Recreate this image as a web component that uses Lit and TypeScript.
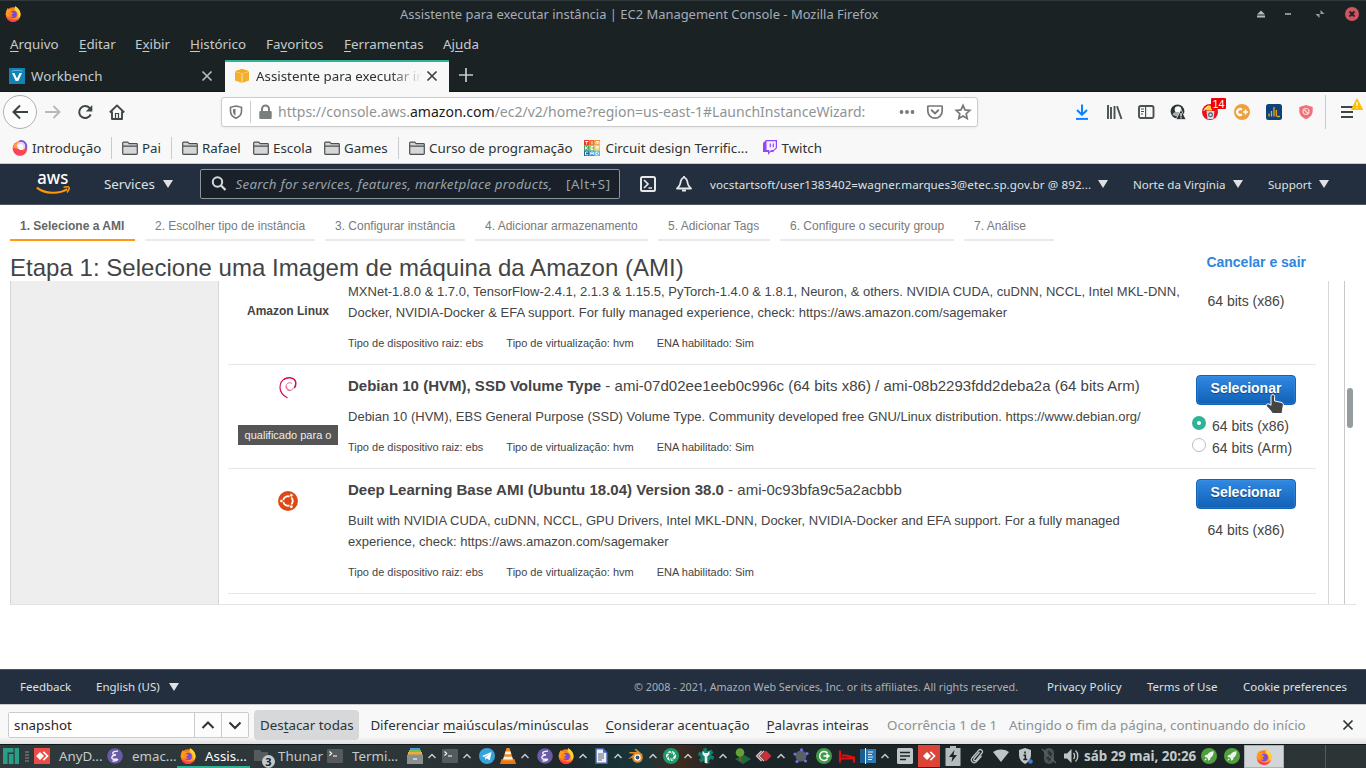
import { LitElement, html, svg, css } from "lit";
import { customElement } from "lit/decorators.js";

const icon = (body: unknown, w = 16, h = 16, vb = `0 0 ${w} ${h}`) =>
  html`<svg width=${w} height=${h} viewBox=${vb} fill="none">${body}</svg>`;

const firefox = () => icon(svg`
  <circle cx="8" cy="8.6" r="7.3" fill="#ff7a1a"/>
  <path d="M.7 9C.7 5.500 2 3.300 3 1.800c.2 1 .8 1.700 1.500 2C6 3.500 7.600 4 8.500 5L10.200.2c2.900 1.800 5.400 4.600 5.200 8.600l-4 4.800z" fill="#ff9a1f"/>
  <path d="M10.200.2c2.900 1.800 5.800 4.700 5.300 9.200-.3 1.600-1.200 3.200-2.400 4.300.8-3 .3-6.700-2-8.600C9.500 3.700 9.500 2 10.200.2z" fill="#ffd531"/>
  <path d="M1.200 11C2.400 14.200 5 15.900 8.100 15.900c3.300 0 6.300-2.100 7-5.400-2 3.400-4.700 3.700-7.300 3.300-2.700-.4-4.600-2-6.600-2.800z" fill="#ff3a57"/>
  <circle cx="8.300" cy="8.400" r="3.600" fill="#7b4bd8"/>
  <path d="M3.400 6c1.600-.5 2.600.2 4.500.4.800.5.300 1.200-1.200 1.800-.7 1 .4 2.300 2 1.900-1.300 1.600-5.800.8-5.300-4.100z" fill="#ff8a16"/>`);
const cross = (c: string) => icon(svg`<path d="M3.500 3.500l9 9m0-9l-9 9" stroke=${c} stroke-width="1.700"/>`);
const folder = () => icon(svg`<path d="M.7 13.500V3a.8.8 0 0 1 .8-.8h4.200l1.500 1.500h7.300a.8.8 0 0 1 .8.8v9a.8.8 0 0 1-.8.800h-13a.8.8 0 0 1-.8-.8zM1 6.100h14" fill="#d6d6d6" stroke="#4a4f51" stroke-width="1.200"/>`);
const tri = () => html`<i class="tri"></i>`;
const caret = () => icon(svg`<path d="M.5 6L4 2.500 7.500 6" stroke="#c3c9ca" stroke-width="1.500"/>`, 8, 8);
const emacs = () => icon(svg`<circle cx="8" cy="8" r="7.800" fill="#6a5ba6"/><path d="M11 3.200C8 3 5.500 4 5.800 5.500 6 6.700 9 6.700 9 6.700S4.800 7.400 4.800 9.800c0 2 3.200 1.600 5.600 1.200M5.500 13c2.500.3 4.500-.5 5.500-1.800" stroke="#f2effa" stroke-width="1.400"/>`);
const terminal = () => icon(svg`<rect y="1" width="16" height="14" rx="1" fill="#555b5d"/><path d="M2.500 3.500l2.200 2-2.200 2M6 8h4" stroke="#fff" stroke-width="1.100"/>`);
const rocket = () => icon(svg`<circle cx="8" cy="8" r="8" fill="#4f9f3c"/><path d="M12.700 3.300c-3 0-5 1.300-6.300 3.400l-2 .4-1 2 2 .2 1.500 1.500.2 2 2-1 .4-2c2-1.300 3.200-3.300 3.200-6.500zM4.300 10.200l-1 2.600 2.600-1z" fill="#eef2ee"/>`);
const anydesk = (w: number) => html`<span class="ad ad${w}">${icon(svg`<path d="M6 4l4 4-4 4-4-4z" fill="#fff"/><path d="M9.300 3.900l4.200 4.100-4.200 4.100" stroke="#fff" stroke-width="1.700"/>`)}</span>`;

@customElement("app-root")
export class AppRoot extends LitElement {
  static styles = css`
    :host { display: block; width: 1366px; height: 768px; overflow: hidden; background: #fff;
      font-family: "Noto Sans", sans-serif; font-size: 13.330px; color: #2c3335; }
    * { box-sizing: border-box; }
    svg { display: block; overflow: visible; }
    u { text-underline-offset: 2px; text-decoration-thickness: 1px; }
    .grid { display: grid; align-items: center; white-space: nowrap; }
    .grid > * { min-width: 0; width: max-content; }

    .titlebar { height: 28px; background: #1b2224; border-top: 1px solid #2f393b; color: #a5adb8; font-size: 12.950px;
      grid-template-columns: 395px 852px 23px 32px 32px 1fr; padding: 0 0 1px 5px; }
    .menubar { height: 32px; background: #1b2224; color: #c6cbcb; padding: 0 0 1px 10px;
      grid-template-columns: 69px 56px 55px 76px 78px 99px 1fr; }
    .tabs { height: 32px; background: #1b2224; display: flex; }
    .tab { display: grid; align-items: center; height: 32px; color: #c6cbcb; border-bottom: 1px solid #101516; white-space: nowrap; border-top: 2px solid transparent; padding-bottom: 1px; }
    .tab.one { width: 225px; padding-left: 9px; grid-template-columns: 22px 168px 1fr; }
    .tab.two { width: 224px; padding-left: 9px; grid-template-columns: 22px 168px 1fr; background: #f8f8f8; border-bottom-color: #f8f8f8; border-top-color: #2eb398; color: #2c3335; }
    .tab .lbl { overflow: hidden; }
    .tab.two .lbl { width: 166px; -webkit-mask-image: linear-gradient(90deg, #000 134px, transparent 166px); }
    .newtab { flex: 1; border-bottom: 1px solid #101516; padding: 7px 0 0 9px; }

    .nav { height: 40px; background: #f8f8f8; padding-left: 3px;
      grid-template-columns: 42px 32px 32px 112px 853px 32px 32px 32px 32px 32px 32px 32px 27px 1fr; }
    .back { width: 34px; height: 34px; border: 1px solid #aeb1b2; border-radius: 50%; background: #fcfcfc; padding: 8px; }
    .nav .url { width: 757px; height: 30px; background: #fff; border: 1px solid #ccc; border-radius: 3px; box-shadow: 0 1px 3px #0001;
      color: #909394; font-size: 14.030px; grid-template-columns: 22px 7px 21px 621px 28px 28px 1fr; padding-left: 6px; }
    .url span { padding-bottom: 2px; }
    .url b { font-weight: 400; color: #1c2021; }
    .vline { width: 1px; background: #c9cbcc; height: 22px; }
    .edge { display: grid; grid-template-columns: 14px 1fr; align-items: center; }
    .vline.tall { height: 34px; }
    .badged { position: relative; }
    .badge { position: absolute; left: 9px; top: -6px; width: 15px; height: 11px; border-radius: 1px; background: #f00000; color: #fff; font: 11px/12px "Liberation Sans", sans-serif; text-align: center; }
    .warn { position: absolute; left: 12px; top: -6px; }

    .marks { height: 32px; background: #f8f8f8; border-bottom: 1px solid #c6c8c9;
      padding-left: 12px; grid-template-columns: 20px 79px 11px 20px 29px 11px 20px 51px 20px 51px 20px 54px 11px 20px 154.500px 22px 157.500px 18.500px 1fr; }

    .aws { height: 41px; background: #232f3e; border-bottom: 1px solid #4b5560; color: #dfe1e3; padding-left: 36px;
      grid-template-columns: 68px 59px 37px 440px 36px 34px 388px 35px 100px 35px 51px 1fr; }
    .aws .sm { font-size: 11.600px; padding-top: 1px; }
    .aws .user { letter-spacing: .09px; }
    .tri { display: block; width: 0; height: 0; border: 5px solid transparent; border-top: 8px solid #dfe1e3; border-bottom: 0; }
    .search { height: 30px; width: 420px; border: 1px solid #8c9596; border-radius: 2px; background: #192029; color: #98a2a6;
      grid-template-columns: 23.500px 330.500px 1fr; padding-left: 11px; }
    .search em { letter-spacing: .26px; }
    .search span { letter-spacing: .6px; }

    .page { height: 464px; font-family: "Liberation Sans", sans-serif; color: #444; }
    .steps { display: flex; gap: 10px; padding: 0 10px; height: 36px; }
    .step { height: 36px; padding: 0 10px; font-size: 12px; line-height: 42px; border-bottom: 2px solid #eaeaea; color: #7a7a7a; white-space: nowrap; }
    .step.on { font-weight: 700; color: #666; border-color: #ff9914; }
    .s1 { width: 125px; } .s2 { width: 170px; } .s3 { width: 140px; } .s4 { width: 173px; } .s5 { width: 112px; } .s6 { width: 174px; } .s7 { width: 90px; }
    .head { display: flex; justify-content: space-between; padding: 0 60px 0 10px; height: 40px; }
    h1 { margin: 0; font-size: 24px; font-weight: 400; line-height: 54px; height: 40px; white-space: nowrap; letter-spacing: .025px; }
    .cancel { color: #2f86de; font-weight: 700; font-size: 14px; line-height: 42px; }
    .pane { display: flex; width: 1346px; margin-left: 10px; height: 324px; border-bottom: 1px solid #e2e2e2; overflow: hidden; }
    .side { width: 209px; background: #eee; border: solid #d6d6d6; border-width: 0 1px; }
    .list { width: 1110px; padding: 0 12px 0 9px; border-right: 1px solid #d6d6d6; }
    .track { width: 16px; border-right: 1px solid #c8c8c8; }
    .thumb { width: 6px; height: 40px; border-radius: 3px; background: #959c9d; margin: 107px 0 0 2px; }
    .row { display: grid; grid-template-columns: 120px 848px 1fr; border-bottom: 1px solid #e6e6e6; height: 104px; }
    .row.first { height: 84px; }
    .row.tall { height: 125px; }
    .logo { display: flex; flex-direction: column; align-items: center; }
    .amz { font-weight: 700; font-size: 12px; line-height: 60px; }
    .debian { margin-top: 12px; }
    .ubuntu { margin-top: 22px; }
    .tip { margin-top: 26px; width: 100px; height: 20px; background: #555; color: #eee; font-size: 11px; line-height: 20px; text-align: center; }
    .name { font-size: 15px; line-height: 21px; padding-top: 10px; height: 41px; white-space: nowrap; letter-spacing: .011px; }
    .desc { font-size: 13px; line-height: 21px; white-space: nowrap; letter-spacing: .008px; }
    .meta { display: flex; gap: 23px; font-size: 11px; line-height: 21px; margin-top: 10px; white-space: nowrap; }
    .arch { display: flex; flex-direction: column; align-items: center; width: 100px; font-size: 14px; white-space: nowrap; position: relative; }
    .first .arch { line-height: 40px; }
    .btn { width: 100px; height: 30px; flex: none; margin-top: 10px; border: 1px solid #1163b5; border-radius: 4px; background: linear-gradient(#3089e2, #1160b6);
      box-shadow: inset 0 0 0 1px #4a97e255; color: #fff; font-weight: 700; font-size: 14px; line-height: 24px; text-align: center; text-shadow: 0 1px 1px #0006; }
    .single { line-height: 42px; }
    .radio { display: grid; grid-template-columns: 20px 1fr; align-self: flex-start; margin-left: -4px; height: 22px; line-height: 20px; }
    .radios { padding-top: 11px; align-self: flex-start; }
    .dot { width: 14px; height: 14px; border-radius: 50%; border: 1px solid #b8bcbe; background: #fff; }
    .dot.on { border: 5px solid #2eb398; }
    .cursor { position: absolute; left: 69px; top: 29px; }

    .foot { height: 35px; background: #232f3e; border-top: 1px solid #4b5560; color: #dfe1e3; font-size: 11.500px; padding: 0 0 1px 20px;
      grid-template-columns: 76px 73px 465px 413px 100px 96px 1fr; }
    .foot .dim { color: #a9b0b7; font-size: 10.760px; }
    .foot .pp { letter-spacing: .16px; }

    .find { height: 40px; background: linear-gradient(#f8f8f8 32px, #dcdcdc 40px); border-top: 1px solid #c9cbcc; padding-left: 8px;
      grid-template-columns: 246px 116.400px 235px 161px 120.600px 122px 331px 1fr; }
    .find .box { display: grid; grid-template-columns: 185px 27px 1fr; width: 241px; height: 26px; border: 1px solid #c9cbcc; background: #fff; border-radius: 2px; line-height: 24px; align-items: stretch; }
    .box > * { border-left: 1px solid #c9cbcc; background: #fcfcfc; padding: 4px 5px; }
    .box > .q { border: 0; padding: 0 5px; background: #fff; color: #1f2526; }
    .find .all { height: 30px; border-radius: 4px; background: #d6d8da; padding: 0 6px; line-height: 30px; width: 105px; }
    .find .dim { color: #8d9192; }

    .task { height: 24px; color: #c3cacb; padding: 0 0 1px 3px; border-top: 1px solid #11181a; font-size: 13.330px;
      background: linear-gradient(#2eb398, #2eb398) 177px 21px / 73px 2px no-repeat,
        linear-gradient(90deg, #2f383b 0, #2c3538 400px, #252c2f 520px, #1d282b 560px, #17353a 640px, #3d2b20 680px, #1b2527 720px, #1d2426 1240px, #2d3436 1290px);
      grid-template-columns: 22px 9px 25px 48px 25px 48px 25px 49px 24px 49px 25px 55px 21px 14px 21px 16px 21px 21px 16px 21px 21px repeat(4, 14px 21px) 16px 21px 21px 16px 23px 23px 21px 21px 16px 21px 27px 24px 24px 24px 24px 23px 20px 117px 23px 20px 1fr; grid-template-rows: 22px; }
    .task .act { color: #fff; }
    .task .clock { font-weight: 700; font-size: 13.400px; }
    .ad { display: grid; place-items: center; background: #ee4b45; width: 16px; height: 16px; }
    .task .ad22 { width: 22px; height: 22px; background: #dd4439; }
    .desk { display: flex; height: 23px; }
    .ws { width: 40px; height: 23px; background: #d3d6d8; border: 1px solid #aab0b3; padding: 3px 0 0 11px; }
    .ws2 { width: 42px; height: 23px; border-right: 1px solid #50595c; }
    .cnt { position: absolute; left: 8px; top: 7px; width: 13px; height: 13px; border-radius: 50%; background: #c3cacb; color: #1b2224; font: bold 11px/13px "Noto Sans", sans-serif; text-align: center; }
  `;

  private meta() {
    return html`<div class="meta"><span>Tipo de dispositivo raiz: ebs</span><span>Tipo de virtualização: hvm</span><span>ENA habilitado: Sim</span></div>`;
  }

  private chrome() {
    return html`
      <div class="titlebar grid">
        ${firefox()}
        <span>Assistente para executar instância | EC2 Management Console - Mozilla Firefox</span>
        ${icon(svg`<path d="M9 4.500l4 4H5zM5 9.500h8v2H5z" fill="#b5bcbd"/>`)}
        ${icon(svg`<path d="M10 8h6" stroke="#a9b0b1" stroke-width="1.600"/>`)}
        ${icon(svg`<path d="M13.500 4v4H17.500zM12.500 12V8H8.500z" fill="#9aa1a2"/>`)}
        ${icon(svg`<circle cx="13" cy="8" r="7" fill="#cf5560"/><path d="M10.500 5.500l5 5m0-5l-5 5" stroke="#1b2224" stroke-width="1.800"/>`)}
      </div>
      <div class="menubar grid">
        <span><u>A</u>rquivo</span><span><u>E</u>ditar</span><span>E<u>x</u>ibir</span><span><u>H</u>istórico</span><span>Fa<u>v</u>oritos</span><span><u>F</u>erramentas</span><span>Aj<u>u</u>da</span>
      </div>
      <div class="tabs">
        <div class="tab one">
          ${icon(svg`<rect width="16" height="16" fill="#1283b5"/><path d="M3 5h2.400L8 10.500 10.600 5H13L9.300 13H6.700z" fill="#fff"/><path d="M2.500 3.200c3.300-1.200 7.700-1.200 11 0" stroke="#7cc4e0" stroke-width=".8"/>`)}
          <span class="lbl">Workbench</span>${cross("#b5bcbd")}
        </div>
        <div class="tab two">
          ${icon(svg`<path d="M1 3.300L8 1l7 2.300v9.200L8 15l-7-2.500z" fill="#f2b02c"/><path d="M1 3.300l7 1.900 7-1.900M8 5.200V15" stroke="#fbe3ae" stroke-width="1"/><path d="M8 1l7 2.300-7 1.900-7-1.900z" fill="#f6a91b"/>`)}
          <span class="lbl">Assistente para executar instância</span>${cross("#3c4345")}
        </div>
        <div class="newtab">${icon(svg`<path d="M8 1v14M1 8h14" stroke="#c6cbcb" stroke-width="1.700"/>`)}</div>
      </div>
      <div class="nav grid">
        <div class="back">${icon(svg`<path d="M16 8H2M8 1.500L1.500 8 8 14.500" stroke="#3b4244" stroke-width="2"/>`)}</div>
        ${icon(svg`<path d="M0 8h14M8.500 2L14.500 8l-6 6" stroke="#b7babb" stroke-width="1.900"/>`)}
        ${icon(svg`<path d="M13.700 10.500A6 6 0 1 1 12.600 4L14 5.500" stroke="#3f4648" stroke-width="2"/><path d="M15.300 1v6.500H8.800z" fill="#3f4648"/>`)}
        ${icon(svg`<path d="M.8 8.500L8 1.400l7.200 7.100M3 7.500v7.500h10V7.500" stroke="#3f4648" stroke-width="1.900" stroke-linejoin="round"/><path d="M6.500 15V9.500h3V15" stroke="#3f4648" stroke-width="1.200"/>`)}
        <div class="url grid">
          ${icon(svg`<path d="M8 2l5.500 1.300v4c0 3-2 5.500-5.500 7-3.500-1.500-5.500-4-5.500-7v-4z" stroke="#747879" stroke-width="1.600"/><path d="M7.500 4.700L5 5.300V7.500c0 1.800.9 3.200 2.500 4.200z" fill="#747879"/>`)}
          <i class="vline"></i>
          ${icon(svg`<rect x="2.300" y="7" width="12.400" height="8" rx="1" fill="#7a7e7f"/><path d="M5 7V5a3.500 3.500 0 0 1 7 0v2" stroke="#7a7e7f" stroke-width="2"/>`)}
          <span>https://console.aws.<b>amazon.com</b>/ec2/v2/home?region=us-east-1#LaunchInstanceWizard:</span>
          ${icon(svg`<circle cx="2.500" cy="8" r="1.900" fill="#747879"/><circle cx="8" cy="8" r="1.900" fill="#747879"/><circle cx="13.500" cy="8" r="1.900" fill="#747879"/>`)}
          ${icon(svg`<path d="M1.500 2h13a.7.7 0 0 1 .7.700V7A7.200 7.200 0 0 1 .8 7V2.700A.7.700 0 0 1 1.500 2z" stroke="#747879" stroke-width="1.700"/><path d="M4.700 6.200L8 9.400l3.300-3.200" stroke="#747879" stroke-width="1.900" stroke-linecap="round"/>`)}
          ${icon(svg`<path d="M8 1.400l2 4.500 4.800.5-3.600 3.300 1 4.900L8 12.100l-4.200 2.500 1-4.900L1.200 6.400 6 5.900z" stroke="#747879" stroke-width="1.700"/>`)}
        </div>
        ${icon(svg`<path d="M8 .5v10M3 6l5 4.800L13 6" stroke="#0a84ff" stroke-width="2"/><path d="M2 14.900h12" stroke="#0a84ff" stroke-width="2"/>`)}
        ${icon(svg`<path d="M2 1v14M5 3v12M8.500 2v13M11 2.300L15.500 15" stroke="#4a5153" stroke-width="1.900"/>`)}
        ${icon(svg`<rect x="1" y="2" width="14.500" height="12" rx="1.800" stroke="#4a5153" stroke-width="1.900"/><path d="M7.600 2v12M3 5h3M3 7.500h3M3 10h2" stroke="#4a5153" stroke-width="1.200"/>`)}
        ${icon(svg`<circle cx="7.500" cy="7.500" r="6.900" fill="#2b3335"/><circle cx="8" cy="5.500" r="3.300" fill="#f8f8f8"/><path d="M2.500 11c0-2 2-3 4-3h3L8 13z" fill="#a9adae"/><path d="M11 5.500L16 15.500H6z" fill="#2b3335" stroke="#f8f8f8" stroke-width=".7"/><path d="M11 9v3.500m0 .7v1.200" stroke="#fff" stroke-width="1.200"/>`)}
        <div class="badged">${icon(svg`<circle cx="8" cy="8" r="8" fill="#e8141b"/><path d="M4.500 7h8l-1 8h-6z" fill="#d9dde2"/><path d="M2 4.500L7 1l3 2v3.500H5" fill="#f4d03f"/><path d="M1.500 7L6 2" stroke="#fff" stroke-width="1"/><circle cx="8.500" cy="10.800" r="1.900" stroke="#49516a" stroke-width="1.100"/>`)}<span class="badge">14</span></div>
        ${icon(svg`<circle cx="8" cy="8" r="8" fill="#eea03e"/><path d="M8 5.600a3 3 0 1 0 0 4.800" stroke="#fff" stroke-width="2.200"/><path d="M9 8h5M11.500 5.500v5" stroke="#fff" stroke-width="1.600"/>`)}
        ${icon(svg`<rect width="16" height="16" rx="2.500" fill="#0e4377"/><path d="M3 12.500v-3M5.500 12.500V7M8 12.500V3M10.300 12.500V6" stroke="#f5a623" stroke-width="1.300"/><path d="M11 12.500h3" stroke="#f5a623" stroke-width="1.300"/>`)}
        ${icon(svg`<path d="M8 1l6.700 2v3.500c0 4-2.200 6.800-6.700 8.700C3.500 13.300 1.300 10.500 1.300 6.500V3z" fill="#f07178"/><circle cx="8" cy="7.500" r="3" stroke="#fbd5d7" stroke-width="1.200"/><path d="M6 5.500l4 4" stroke="#fbd5d7" stroke-width="1.200"/>`)}
        <div class="edge"><i class="vline tall"></i>
          <div class="badged">${icon(svg`<path d="M2 3h12M2 8h12M2 13h12" stroke="#3f4648" stroke-width="1.900"/>`)}
          <span class="warn">${icon(svg`<path d="M6 .8L11.500 11.500H.5z" fill="#ffbf00" stroke="#ffbf00" stroke-linejoin="round"/><path d="M6 4v4m0 1.200v1.300" stroke="#fff" stroke-width="1.300"/>`, 12, 12)}</span></div></div>
      </div>
      <div class="marks grid">
        ${icon(svg`<circle cx="8" cy="8.500" r="7.300" fill="#ff5a3c"/><path d="M1 8c0-3 2-5.500 5-6.500C4 5 5 9 9 10.500c3 1 5-.5 6-2.500 0 4-3 7.800-7 7.800A7.200 7.200 0 0 1 1 8z" fill="#ff2f74" fill-opacity=".55"/><path d="M1.200 7.500C2 4 4 2 6.500 1.400 4.500 4 4.500 7 6 9z" fill="#ffa63e"/><circle cx="9.300" cy="5.800" r="4.300" fill="#f8f8f8"/><path d="M7 1.500a5 5 0 0 1 6.500 7" stroke="#7d55e8" stroke-width="1.900"/><path d="M6 4.500a3.300 3.300 0 0 1 5.500 4" stroke="#d9ccf6" stroke-width="1.300"/>`)}
        <span>Introdução</span><i class="vline"></i>
        ${folder()}<span>Pai</span><i class="vline"></i>
        ${folder()}<span>Rafael</span>${folder()}<span>Escola</span>${folder()}<span>Games</span><i class="vline"></i>
        ${folder()}<span>Curso de programação</span>
        ${icon(svg`
          <path d="M0 0h5.300v5.300H0z" fill="#e5382b"/><path d="M5.300 0h5.300v5.300H5.300z" fill="#ef6a2c"/><path d="M10.600 0H16v5.300h-5.400z" fill="#f59331"/>
          <path d="M0 5.300h5.300v5.300H0z" fill="#3aa655"/><path d="M5.300 5.300h5.300v5.300H5.300z" fill="#78bb43"/><path d="M10.600 5.300H16v5.300h-5.400z" fill="#f0c52e"/>
          <path d="M0 10.600h5.300V16H0z" fill="#1568ad"/><path d="M5.300 10.600h5.300V16H5.300z" fill="#2d8fd0"/><path d="M10.600 10.600H16V16h-5.400z" fill="#5db5e6"/>
          <path d="M1 1.500h3.500M2.700 1.500V4.500M8 1.200v3.300M12 4.500V1.500h3v3M13.500 1.500V4M1.500 6.300v3.200M4.200 6.300L2 8l2.200 1.500M9.500 6.500H7v3h2.500M7 8h2M12 9.700V6.500h2.500V8H12.500l2 1.700M4.300 12H1.500v2.800h2.800M6.800 15v-3h2.500v3M7 13.500h2M12 12v2.800h1.700l.8-.8v-1.200l-.8-.8z" stroke="#fff" stroke-width=".9"/>`)}
        <span>Circuit design Terrific...</span>
        ${icon(svg`<path d="M3 0h11v8l-4 4H7.500L5 15v-3H0V3z" fill="#9146ff"/><path d="M3.500 1.300h9.300v6.500L10.500 10H8.300l-2 2v-2H3.500z" fill="#f6f0ff"/><path d="M7.300 3.500v3.800M10.300 3.500v3.800" stroke="#9146ff" stroke-width="1.200"/>`)}
        <span>Twitch</span>
      </div>`;
  }

  private awsBar() {
    return html`<div class="aws grid">
      ${icon(svg`<text x="1.300" y="10" textLength="31" lengthAdjust="spacingAndGlyphs" font-family="Noto Sans, sans-serif" font-size="18.500" font-weight="500" fill="#fff">aws</text>
        <path d="M.8 13.600c8.500 6.600 22 6.800 30.500 1.600" stroke="#ff9900" stroke-width="2"/><path d="M27.500 13.400c2.500-.9 5.300-.8 5.600-.2.300.8-.5 3.500-2.200 5.200" stroke="#ff9900" stroke-width="1.400"/>`, 34, 21)}
      <span>Services</span>${tri()}
      <div class="search grid">
        ${icon(svg`<circle cx="5.500" cy="6" r="4.700" stroke="#d5dbdb" stroke-width="2"/><path d="M9 9.500l4.500 4.500" stroke="#d5dbdb" stroke-width="2.300"/>`)}
        <em>Search for services, features, marketplace products,</em><span>[Alt+S]</span>
      </div>
      ${icon(svg`<rect x="1" y="1" width="14" height="14" rx="1.500" stroke="#e6e8ea" stroke-width="2"/><path d="M4 4l4 4-4 4M8.500 12H12" stroke="#e6e8ea" stroke-width="1.700"/>`)}
      ${icon(svg`<path d="M8 1.500c-3.300 1-3.500 4-3.700 6C4.100 9.500 2.500 11 1 12.500h14C13.500 11 11.900 9.500 11.700 7.500c-.2-2-.4-5-3.700-6z" stroke="#e6e8ea" stroke-width="1.800" stroke-linejoin="round"/><path d="M8 0v2M6 14.500h4" stroke="#e6e8ea" stroke-width="1.800"/>`)}
      <span class="sm user">vocstartsoft/user1383402=wagner.marques3@etec.sp.gov.br @ 892...</span>${tri()}
      <span class="sm">Norte da Virgínia</span>${tri()}<span class="sm">Support</span>${tri()}
    </div>`;
  }

  private page() {
    const steps = ["1. Selecione a AMI", "2. Escolher tipo de instância", "3. Configurar instância", "4. Adicionar armazenamento", "5. Adicionar Tags", "6. Configure o security group", "7. Análise"];
    return html`<div class="page">
      <div class="steps">${steps.map((s, i) => html`<div class="step s${i + 1} ${i ? "" : "on"}">${s}</div>`)}</div>
      <div class="head"><h1>Etapa 1: Selecione uma Imagem de máquina da Amazon (AMI)</h1><span class="cancel">Cancelar e sair</span></div>
      <div class="pane">
        <div class="side"></div>
        <div class="list">
          <div class="row first">
            <div class="logo"><span class="amz">Amazon Linux</span></div>
            <div><div class="desc">MXNet-1.8.0 &amp; 1.7.0, TensorFlow-2.4.1, 2.1.3 &amp; 1.15.5, PyTorch-1.4.0 &amp; 1.8.1, Neuron, &amp; others. NVIDIA CUDA, cuDNN, NCCL, Intel MKL-DNN,<br>Docker, NVIDIA-Docker &amp; EFA support. For fully managed experience, check: https://aws.amazon.com/sagemaker</div>${this.meta()}</div>
            <div class="arch">64 bits (x86)</div>
          </div>
          <div class="row">
            <div class="logo">
              <span class="debian">${icon(svg`<path d="M8.500 21C4 18.500 1 15 1 10.500 1 6 3.500 3 6 1.800" stroke="#d70a53" stroke-width="1.200"/><path d="M4.500 2.500C9-.5 16 .3 16.800 5.500c.3 2.500-.5 4-1.500 5.500" stroke="#d70a53" stroke-width="1.500"/><path d="M14.500 11c-1.500 3-5 3-6.500 1.500C6 10.300 7 6.500 10 5.800c1.500-.2 2.500.3 3 .9M7.500 9c0 3 2 4.500 4 4.200" stroke="#e04a80" stroke-width=".8"/>`, 18, 22)}</span>
              <span class="tip">qualificado para o</span>
            </div>
            <div>
              <div class="name"><b>Debian 10 (HVM), SSD Volume Type</b> - ami-07d02ee1eeb0c996c (64 bits x86) / ami-08b2293fdd2deba2a (64 bits Arm)</div>
              <div class="desc">Debian 10 (HVM), EBS General Purpose (SSD) Volume Type. Community developed free GNU/Linux distribution. https://www.debian.org/</div>${this.meta()}
            </div>
            <div class="arch">
              <span class="btn">Selecionar</span>
              <div class="radios">
                <div class="radio"><i class="dot on"></i><span>64 bits (x86)</span></div>
                <div class="radio"><i class="dot"></i><span>64 bits (Arm)</span></div>
              </div>
              <span class="cursor">${icon(svg`<path d="M7 .8c1.300-.5 2.600.2 2.600 1.600V7l6.400 1.300c1.600.4 2.500 1.300 2.300 3L17 19.500H7.500C6 17 3.800 14.500 1.300 12 .7 10.700 2.500 9.300 4 10l2 1.300V2.300c0-.7.400-1.300 1-1.500z" fill="#454545" stroke="#fff" stroke-width="1"/>`, 20, 21)}</span>
            </div>
          </div>
          <div class="row tall">
            <div class="logo"><span class="ubuntu">${icon(svg`<circle cx="10" cy="10" r="10" fill="#dd4814"/><circle cx="10" cy="10" r="4.700" stroke="#fff" stroke-width="2"/><path d="M10 10L2 10M10 10l4-7M10 10l4 7" stroke="#dd4814" stroke-width="1.500"/><circle cx="10" cy="10" r="3.300" fill="#dd4814"/><g fill="#fff" stroke="#dd4814" stroke-width=".8"><circle cx="3.400" cy="10" r="1.800"/><circle cx="13.300" cy="4.300" r="1.800"/><circle cx="13.300" cy="15.700" r="1.800"/></g>`, 20, 20)}</span></div>
            <div>
              <div class="name"><b>Deep Learning Base AMI (Ubuntu 18.04) Version 38.0</b> - ami-0c93bfa9c5a2acbbb</div>
              <div class="desc">Built with NVIDIA CUDA, cuDNN, NCCL, GPU Drivers, Intel MKL-DNN, Docker, NVIDIA-Docker and EFA support. For a fully managed<br>experience, check: https://aws.amazon.com/sagemaker</div>${this.meta()}
            </div>
            <div class="arch"><span class="btn">Selecionar</span><span class="single">64 bits (x86)</span></div>
          </div>
        </div>
        <div class="track"></div><div class="thumb"></div>
      </div>
    </div>`;
  }

  private taskbar() {
    return html`<div class="task grid">
      ${icon(svg`<path d="M0 0h10.500v4.500H4.600V16H0zM5.800 6h4.700v10H5.800zM11.700 0H16v16h-4.300z" fill="#2a9d87"/>`)}
      ${icon(svg`<path d="M0 1h4M0 4h4M0 7h4M0 10h4" stroke="#8b9495" stroke-width="1"/>`, 5, 11)}
      ${anydesk(16)}<span>AnyD...</span>${emacs()}<span>emac...</span>${firefox()}<span class="act">Assis...</span>
      <div class="badged">${icon(svg`<path d="M0 2h6l1.500 2H14v9H0z" fill="#565c5e"/>`)}<span class="cnt">3</span></div><span>Thunar</span>
      ${terminal()}<span>Termi...</span>
      ${icon(svg`<path d="M3 0h10v3H3z" fill="#4f98d3"/><path d="M2 2h12v3H2z" fill="#6fbf5b"/><path d="M1 4h14v3H1z" fill="#f0a93b"/><path d="M0 6.500h16V16H0z" fill="#8a8f90"/><path d="M6 11h4" stroke="#eee" stroke-width="1.300"/>`)}${caret()}
      ${terminal()}${caret()}
      ${icon(svg`<circle cx="8" cy="8" r="8" fill="#36a3db"/><path d="M3 8l9.500-4-1.700 8.500-3-2.200-1.500 1.500-.3-2.600L11 5.500 5 8.900z" fill="#fff"/>`)}
      ${icon(svg`<path d="M1.500 11h13l1.500 5H0z" fill="#e8760c"/><path d="M6.500 0h3l4 13h-11z" fill="#f28a1c"/><path d="M5.500 3.500h5l.8 2.700H4.700zM3.900 8.800h8.200l.8 2.700H3.100z" fill="#f3f1ee"/>`)}${caret()}
      ${emacs()}${firefox()}${caret()}
      ${icon(svg`<path d="M3 .7h7l4 4v10.600H3z" fill="#eef0f4" stroke="#4a62b0" stroke-width="1.400"/><path d="M10 .7v4h4" fill="#3c6bd0"/><path d="M5 6h6M5 8h6M5 10h6M5 12h4" stroke="#5c667a" stroke-width="1"/>`)}${caret()}
      ${icon(svg`<path d="M0 11l7-5.500H1.500V4H9L6.500 1.500 8 .8l7 6.200" fill="#ea8a1d"/><circle cx="9.500" cy="9.500" r="5.300" fill="#ea8a1d"/><circle cx="9.500" cy="9.500" r="3.200" fill="#fff"/><circle cx="9.500" cy="9.500" r="1.900" fill="#265787"/>`)}${caret()}
      ${icon(svg`<circle cx="8" cy="8" r="8" fill="#1d9a6b"/><circle cx="8" cy="8" r="3.800" stroke="#e6f3ee" stroke-width="2.600"/><path d="M8 2l1.500 4.500M13 5L9.500 9M13 11.500L8.500 11M8 14l-1.500-4M3 11l3.500-4.500M3 5l5 .5" stroke="#1d9a6b" stroke-width="1"/>`)}${caret()}
      ${icon(svg`<circle cx="8" cy="8" r="5.700" fill="#12806f"/><circle cx="8" cy="8" r="6.500" stroke="#12806f" stroke-width="3" stroke-dasharray="3.400 3.400"/><path d="M4.500 2.500v4l2.200 2V15h2.600V8.500l2.200-2v-4L9.500 5h-3z" fill="#e8efee"/>`)}${caret()}
      ${icon(svg`<path d="M0 11l9-4 7 4-8 5z" fill="#1f6b3c"/><path d="M4.500 7v6h1.600V7z" fill="#7a5b35"/><circle cx="5" cy="4.500" r="4.300" fill="#5fa334"/>`)}
      ${icon(svg`<path d="M5.500 3L.5 8l5 5M8 3L3 8l5 5" stroke="#e7c5c5" stroke-width="1.300"/><path d="M10 2.500L15.500 8 10 13.500 4.500 8z" fill="#c9303a"/>`)}${caret()}
      ${icon(svg`<circle cx="8" cy="8" r="5.500" fill="#5b6066"/><g fill="#7070e6"><circle cx="8.500" cy="1.800" r="1.600"/><circle cx="14" cy="5.500" r="1.600"/><circle cx="12.500" cy="13" r="1.600"/><circle cx="4" cy="13.500" r="1.600"/><circle cx="2" cy="6" r="1.600"/></g>`)}
      ${icon(svg`<circle cx="8" cy="8" r="8" fill="#3f9a47"/><path d="M11.500 5.300a4.400 4.400 0 1 0 0 5.400M7.500 8H13M10.500 6l2.500 2-2.500 2" stroke="#fff" stroke-width="1.500"/>`)}
      ${icon(svg`<path d="M1 2.500v12M1 10.500h14V14.500M3 7.500h4L15 9.500v1" stroke="#e01010" stroke-width="2.200"/>`)}
      ${icon(svg`<path d="M0 1h5.500v14H0z" fill="#1d5e92"/><path d="M5.500 1H16v14H5.500z" fill="#277ab5"/><path d="M5.500 0v16M8 4h5M8 6.500h4M8 9h5M8 11.500h4" stroke="#dbe8f2" stroke-width="1"/>`)}${caret()}
      ${icon(svg`<rect y="0" width="16" height="16" rx="1.500" fill="#c0c6c7"/><path d="M3 4.500h10M3 8h10M3 11.500h6" stroke="#1d2426" stroke-width="1.700"/>`)}
      ${anydesk(22)}
      ${icon(svg`<path d="M5-2h6v2h4.500v18H.5V0H5z" fill="#b5bcbd"/><path d="M9.500 2L4 9h3.500L6.500 14 12 7H8.500z" fill="#1d2426"/>`)}
      ${icon(svg`<path d="M10.500 4L5 10.500c-1 1.500.8 3 2 1.800l6-7.300c1.500-2.200-1.500-4.700-3.400-2.600L3 10c-2.200 3.200 2 6.500 4.500 3.600L12.500 8" stroke="#c0c6c7" stroke-width="1.300"/>`)}
      ${icon(svg`<path d="M0 4c5-3.300 11-3.300 16 0L8 14z" fill="#c0c6c7"/>`)}
      ${icon(svg`<path d="M8 0l6 2v5c0 4-2.300 7-6 9-3.700-2-6-5-6-9V2z" fill="#c0c6c7"/><path d="M8 3.500v2M6.500 7.200H8.300V11M6.300 11.500h4" stroke="#1d2426" stroke-width="1.600"/><circle cx="13.500" cy="13.500" r="2.300" fill="#3a7bdc"/>`)}
      ${icon(svg`<rect x="3" y="0" width="10" height="16" rx="5" fill="#4d5456"/><path d="M5.500 5l5 5-2.500 2.500v-9L10.500 6l-5 5" stroke="#20272a" stroke-width="1.100"/><path d="M1 1l14 14" stroke="#5d6466" stroke-width="1.200"/>`)}
      ${icon(svg`<path d="M0 5.500h3L7.500 1v14L3 10.500H0z" fill="#c0c6c7"/><path d="M9.500 5c1.500 1.500 1.500 4.500 0 6M11.500 2.500c3 2.500 3 8.500 0 11" stroke="#c0c6c7" stroke-width="1.400"/>`)}
      <span class="clock">sáb 29 mai, 20:26</span>${rocket()}${rocket()}
      <div class="desk"><div class="ws">${firefox()}</div><div class="ws2"></div></div>
    </div>`;
  }

  render() {
    return html`${this.chrome()}${this.awsBar()}${this.page()}
      <div class="foot grid"><span>Feedback</span><span>English (US)</span>${tri()}
        <span class="dim">© 2008 - 2021, Amazon Web Services, Inc. or its affiliates. All rights reserved.</span>
        <span class="pp">Privacy Policy</span><span>Terms of Use</span><span>Cookie preferences</span></div>
      <div class="find grid">
        <div class="box"><span class="q">snapshot</span>
          <span>${icon(svg`<path d="M2.500 11L8 5.500l5.500 5.500" stroke="#2c3335" stroke-width="2"/>`)}</span>
          <span>${icon(svg`<path d="M2.500 5.500L8 11l5.500-5.500" stroke="#2c3335" stroke-width="2"/>`)}</span></div>
        <span class="all">Des<u>t</u>acar todas</span>
        <span>Diferenciar <u>m</u>aiúsculas/minúsculas</span><span><u>C</u>onsiderar acentuação</span><span><u>P</u>alavras inteiras</span>
        <span class="dim">Ocorrência 1 de 1</span><span class="dim">Atingido o fim da página, continuando do início</span>${cross("#2c3335")}
      </div>
      ${this.taskbar()}`;
  }
}
